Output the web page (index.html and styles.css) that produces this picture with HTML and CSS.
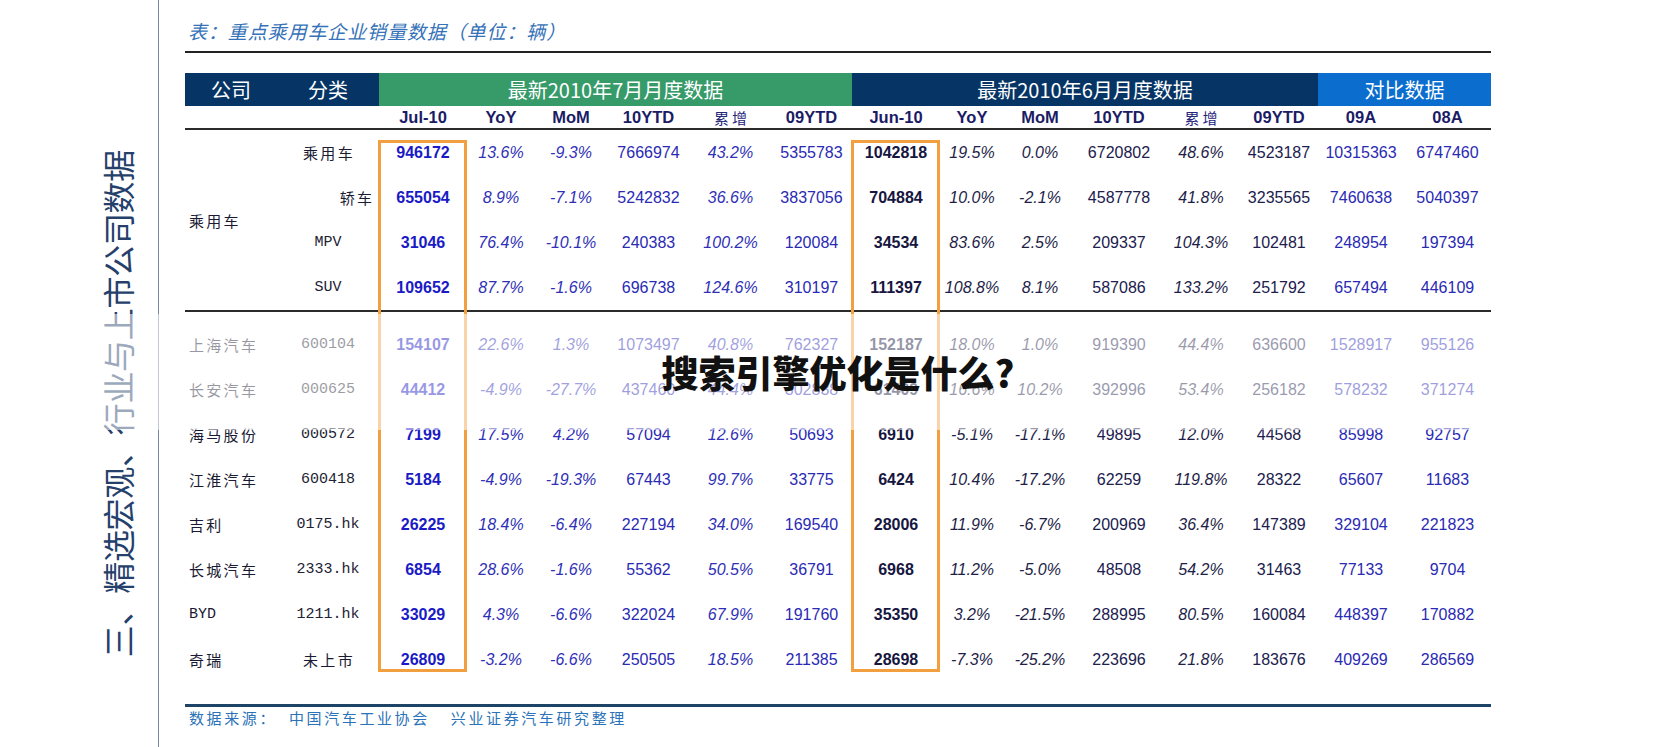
FILE: index.html
```html
<!DOCTYPE html>
<html lang="zh-CN">
<head>
<meta charset="utf-8">
<title>重点乘用车企业销量数据</title>
<link rel="stylesheet" href="styles.css">
</head>
<body>
<div class="page">
  <aside class="side">
    <div class="side-title">三、精选宏观、行业与上市公司数据</div>
  </aside>
  <main class="main">
    <div class="caption">表：重点乘用车企业销量数据（单位：辆）</div>
    <div class="sheet">
      <div class="grid head1">
        <div class="hc navy">公司</div>
        <div class="hc navy">分类</div>
        <div class="hc green span6">最新2010年7月月度数据</div>
        <div class="hc navy span6">最新2010年6月月度数据</div>
        <div class="hc blue span2">对比数据</div>
      </div>
      <div class="grid head2">
        <div></div><div></div>
        <div class="hl">Jul-10</div><div class="hl">YoY</div><div class="hl">MoM</div><div class="hl">10YTD</div><div class="hl cjk">累增</div><div class="hl">09YTD</div>
        <div class="hl">Jun-10</div><div class="hl">YoY</div><div class="hl">MoM</div><div class="hl">10YTD</div><div class="hl cjk">累增</div><div class="hl">09YTD</div>
        <div class="hl">09A</div><div class="hl">08A</div>
      </div>

      <div class="grid sec1">
        <div class="cell group">乘用车</div>
        <div class="cell cat">乘用车</div>
        <div class="cell b1">946172</div><div class="cell p1">13.6%</div><div class="cell p1">-9.3%</div><div class="cell n1">7666974</div><div class="cell p1">43.2%</div><div class="cell n1">5355783</div>
        <div class="cell b2">1042818</div><div class="cell p2">19.5%</div><div class="cell p2">0.0%</div><div class="cell n2">6720802</div><div class="cell p2">48.6%</div><div class="cell n2">4523187</div>
        <div class="cell n1">10315363</div><div class="cell n1">6747460</div>

        <div class="cell cat shift">轿车</div>
        <div class="cell b1">655054</div><div class="cell p1">8.9%</div><div class="cell p1">-7.1%</div><div class="cell n1">5242832</div><div class="cell p1">36.6%</div><div class="cell n1">3837056</div>
        <div class="cell b2">704884</div><div class="cell p2">10.0%</div><div class="cell p2">-2.1%</div><div class="cell n2">4587778</div><div class="cell p2">41.8%</div><div class="cell n2">3235565</div>
        <div class="cell n1">7460638</div><div class="cell n1">5040397</div>

        <div class="cell code">MPV</div>
        <div class="cell b1">31046</div><div class="cell p1">76.4%</div><div class="cell p1">-10.1%</div><div class="cell n1">240383</div><div class="cell p1">100.2%</div><div class="cell n1">120084</div>
        <div class="cell b2">34534</div><div class="cell p2">83.6%</div><div class="cell p2">2.5%</div><div class="cell n2">209337</div><div class="cell p2">104.3%</div><div class="cell n2">102481</div>
        <div class="cell n1">248954</div><div class="cell n1">197394</div>

        <div class="cell code">SUV</div>
        <div class="cell b1">109652</div><div class="cell p1">87.7%</div><div class="cell p1">-1.6%</div><div class="cell n1">696738</div><div class="cell p1">124.6%</div><div class="cell n1">310197</div>
        <div class="cell b2">111397</div><div class="cell p2">108.8%</div><div class="cell p2">8.1%</div><div class="cell n2">587086</div><div class="cell p2">133.2%</div><div class="cell n2">251792</div>
        <div class="cell n1">657494</div><div class="cell n1">446109</div>
      </div>

      <div class="grid sec2">
        <div class="cell name">上海汽车</div><div class="cell code">600104</div>
        <div class="cell b1">154107</div><div class="cell p1">22.6%</div><div class="cell p1">1.3%</div><div class="cell n1">1073497</div><div class="cell p1">40.8%</div><div class="cell n1">762327</div>
        <div class="cell b2">152187</div><div class="cell p2">18.0%</div><div class="cell p2">1.0%</div><div class="cell n2">919390</div><div class="cell p2">44.4%</div><div class="cell n2">636600</div>
        <div class="cell n1">1528917</div><div class="cell n1">955126</div>

        <div class="cell name">长安汽车</div><div class="cell code">000625</div>
        <div class="cell b1">44412</div><div class="cell p1">-4.9%</div><div class="cell p1">-27.7%</div><div class="cell n1">437460</div><div class="cell p1">44.4%</div><div class="cell n1">302838</div>
        <div class="cell b2">61409</div><div class="cell p2">16.6%</div><div class="cell p2">10.2%</div><div class="cell n2">392996</div><div class="cell p2">53.4%</div><div class="cell n2">256182</div>
        <div class="cell n1">578232</div><div class="cell n1">371274</div>

        <div class="cell name">海马股份</div><div class="cell code">000572</div>
        <div class="cell b1">7199</div><div class="cell p1">17.5%</div><div class="cell p1">4.2%</div><div class="cell n1">57094</div><div class="cell p1">12.6%</div><div class="cell n1">50693</div>
        <div class="cell b2">6910</div><div class="cell p2">-5.1%</div><div class="cell p2">-17.1%</div><div class="cell n2">49895</div><div class="cell p2">12.0%</div><div class="cell n2">44568</div>
        <div class="cell n1">85998</div><div class="cell n1">92757</div>

        <div class="cell name">江淮汽车</div><div class="cell code">600418</div>
        <div class="cell b1">5184</div><div class="cell p1">-4.9%</div><div class="cell p1">-19.3%</div><div class="cell n1">67443</div><div class="cell p1">99.7%</div><div class="cell n1">33775</div>
        <div class="cell b2">6424</div><div class="cell p2">10.4%</div><div class="cell p2">-17.2%</div><div class="cell n2">62259</div><div class="cell p2">119.8%</div><div class="cell n2">28322</div>
        <div class="cell n1">65607</div><div class="cell n1">11683</div>

        <div class="cell name">吉利</div><div class="cell code">0175.hk</div>
        <div class="cell b1">26225</div><div class="cell p1">18.4%</div><div class="cell p1">-6.4%</div><div class="cell n1">227194</div><div class="cell p1">34.0%</div><div class="cell n1">169540</div>
        <div class="cell b2">28006</div><div class="cell p2">11.9%</div><div class="cell p2">-6.7%</div><div class="cell n2">200969</div><div class="cell p2">36.4%</div><div class="cell n2">147389</div>
        <div class="cell n1">329104</div><div class="cell n1">221823</div>

        <div class="cell name">长城汽车</div><div class="cell code">2333.hk</div>
        <div class="cell b1">6854</div><div class="cell p1">28.6%</div><div class="cell p1">-1.6%</div><div class="cell n1">55362</div><div class="cell p1">50.5%</div><div class="cell n1">36791</div>
        <div class="cell b2">6968</div><div class="cell p2">11.2%</div><div class="cell p2">-5.0%</div><div class="cell n2">48508</div><div class="cell p2">54.2%</div><div class="cell n2">31463</div>
        <div class="cell n1">77133</div><div class="cell n1">9704</div>

        <div class="cell name mono">BYD</div><div class="cell code">1211.hk</div>
        <div class="cell b1">33029</div><div class="cell p1">4.3%</div><div class="cell p1">-6.6%</div><div class="cell n1">322024</div><div class="cell p1">67.9%</div><div class="cell n1">191760</div>
        <div class="cell b2">35350</div><div class="cell p2">3.2%</div><div class="cell p2">-21.5%</div><div class="cell n2">288995</div><div class="cell p2">80.5%</div><div class="cell n2">160084</div>
        <div class="cell n1">448397</div><div class="cell n1">170882</div>

        <div class="cell name">奇瑞</div><div class="cell cat">未上市</div>
        <div class="cell b1">26809</div><div class="cell p1">-3.2%</div><div class="cell p1">-6.6%</div><div class="cell n1">250505</div><div class="cell p1">18.5%</div><div class="cell n1">211385</div>
        <div class="cell b2">28698</div><div class="cell p2">-7.3%</div><div class="cell p2">-25.2%</div><div class="cell n2">223696</div><div class="cell p2">21.8%</div><div class="cell n2">183676</div>
        <div class="cell n1">409269</div><div class="cell n1">286569</div>
      </div>

      <div class="hilite hilite-jul"></div>
      <div class="hilite hilite-jun"></div>
    </div>
    <div class="source">
      <span>数据来源：</span><span class="src-a">中国汽车工业协会</span><span class="src-b">兴业证券汽车研究整理</span>
    </div>
  </main>
  <div class="banner">
    <h1 class="banner-title">搜索引擎优化是什么?</h1>
  </div>
</div>
</body>
</html>
```

FILE: styles.css
```css
* { box-sizing: border-box; }
html, body { margin: 0; padding: 0; background: #ffffff; }
body { font-family: "Liberation Sans", Arial, "Noto Sans CJK SC", sans-serif; }

.page {
  position: relative;
  display: flex;
  width: 1676px;
  height: 747px;
  overflow: hidden;
  background: #ffffff;
}

.side {
  width: 159px;
  flex: 0 0 159px;
  border-right: 1px solid #7488a2;
  padding-top: 150px;
  padding-left: 97px;
}
.side-title {
  writing-mode: vertical-rl;
  text-orientation: sideways;
  transform: rotate(180deg);
  font-family: "Noto Sans CJK SC", sans-serif;
  font-size: 32px;
  line-height: 40px;
  letter-spacing: -0.3px;
  color: #25416b;
  width: 40px;
}

.main {
  flex: 0 0 auto;
  width: 1332px;
  padding-left: 26px;
}

.caption {
  width: 1306px;
  padding: 19px 0 8px 3px;
  line-height: 24px;
  font-family: "Noto Sans CJK SC", sans-serif;
  font-size: 19px;
  letter-spacing: 0.9px;
  font-style: italic;
  color: #3572b8;
  border-bottom: 2px solid #222222;
}

.sheet {
  position: relative;
  width: 1306px;
  margin-top: 20px;
}

.grid {
  display: grid;
  grid-template-columns: 92px 102px 88px 68px 72px 83px 81px 81px 88px 64px 72px 86px 78px 78px 86px 87px;
}

.head1 { height: 33px; }
.hc {
  display: flex;
  align-items: center;
  justify-content: center;
  font-family: "Noto Sans CJK SC", sans-serif;
  font-size: 20px;
  color: #ffffff;
}
.navy { background: #063565; }
.green { background: #379a69; }
.blue { background: #0b6dce; }
.span6 { grid-column: span 6; }
.span2 { grid-column: span 2; }

.head2 {
  height: 24px;
  border-bottom: 2px solid #2b2b2b;
}
.hl {
  display: flex;
  align-items: center;
  justify-content: center;
  font-family: "Liberation Sans", Arial, sans-serif;
  font-weight: 700;
  font-size: 16.5px;
  color: #1b1b66;
}
.hl.cjk {
  font-family: "Noto Sans CJK SC", sans-serif;
  font-weight: 400;
  font-size: 15px;
  letter-spacing: 3px;
  padding-left: 3px;
  color: #26267a;
}

.sec1 {
  grid-auto-rows: 45px;
  border-bottom: 2px solid #2a2a2a;
}
.sec2 {
  grid-auto-rows: 45px;
  padding-top: 10px;
}

.cell {
  display: flex;
  align-items: center;
  justify-content: center;
  font-family: "Liberation Sans", Arial, sans-serif;
  font-size: 16px;
  line-height: 1;
  white-space: nowrap;
}
.group {
  grid-row: span 4;
  justify-content: flex-start;
  padding-left: 4px;
  font-family: "Noto Sans CJK SC", sans-serif;
  font-size: 15px;
  letter-spacing: 2.3px;
  color: #1a1a33;
}
.name {
  justify-content: flex-start;
  padding-left: 4px;
  font-family: "Noto Sans CJK SC", sans-serif;
  font-size: 15px;
  letter-spacing: 2.3px;
  color: #1a1a33;
}
.name.mono {
  font-family: "Liberation Mono", monospace;
  font-size: 15px;
  letter-spacing: 0;
}
.cat {
  font-family: "Noto Sans CJK SC", sans-serif;
  font-size: 15px;
  letter-spacing: 2.3px;
  padding-left: 2px;
  color: #1a1a33;
}
.cat.shift { padding-left: 58px; }
.code {
  font-family: "Liberation Mono", monospace;
  font-size: 15px;
  color: #222233;
}

.b1 { font-weight: 700; color: #1a1ac6; }
.p1 { font-style: italic; color: #3030b6; }
.n1 { color: #2a2ab4; }
.b2 { font-weight: 700; color: #161640; }
.p2 { font-style: italic; color: #1e1e48; }
.n2 { color: #20204e; }

.hilite {
  position: absolute;
  top: 67px;
  width: 89px;
  height: 532px;
  border: 3px solid #f2a03f;
  pointer-events: none;
}
.hilite-jul { left: 193px; }
.hilite-jun { left: 666px; }

.source {
  width: 1306px;
  margin-top: 22px;
  border-top: 3px solid #1d4466;
  padding-left: 4px;
  line-height: 21px;
  font-family: "Noto Sans CJK SC", sans-serif;
  font-size: 15px;
  letter-spacing: 2.6px;
  color: #2b73b8;
}
.src-a { margin-left: 12px; }
.src-b { margin-left: 21px; }

.banner {
  position: absolute;
  left: 0;
  right: 0;
  top: 314px;
  height: 116px;
  background: rgba(255, 255, 255, 0.55);
  display: flex;
  align-items: center;
  justify-content: center;
}
.banner-title {
  margin: 0;
  font-family: "Noto Sans CJK SC", sans-serif;
  font-weight: 900;
  font-size: 37px;
  line-height: 1;
  color: #111111;
}
```
